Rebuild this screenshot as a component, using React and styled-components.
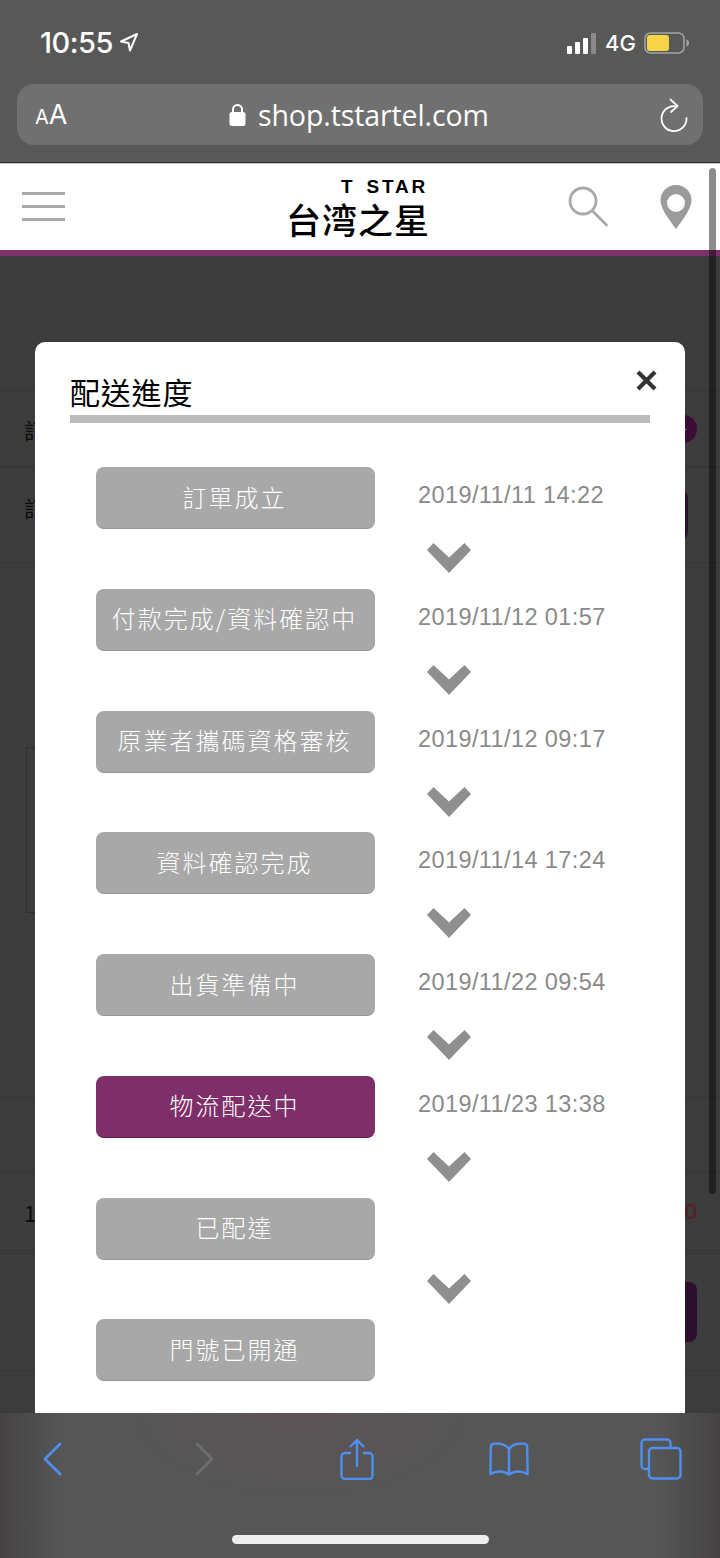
import styled, { createGlobalStyle } from "styled-components";

const steps = [
  { label: "訂單成立", time: "2019/11/11 14:22" },
  { label: "付款完成/資料確認中", time: "2019/11/12 01:57" },
  { label: "原業者攜碼資格審核", time: "2019/11/12 09:17" },
  { label: "資料確認完成", time: "2019/11/14 17:24" },
  { label: "出貨準備中", time: "2019/11/22 09:54" },
  { label: "物流配送中", time: "2019/11/23 13:38", active: true },
  { label: "已配達" },
  { label: "門號已開通" },
];

function App() {
  return (
    <Screen>
      <GlobalStyle />
      <StatusBar>
        <TimeGroup>
          <Clock>10:55</Clock>
          <svg width="20" height="20" viewBox="0 0 20 20" fill="none" stroke="#fff" strokeWidth="2" strokeLinejoin="round">
            <path d="M18 2 2 9.5l7.5 1.5 1.5 7.5z" />
          </svg>
        </TimeGroup>
        <Indicators>
          <svg width="30" height="21" viewBox="0 0 30 21" fill="#fff">
            <rect x="0" y="13" width="5" height="8" rx="1" />
            <rect x="8" y="9" width="5" height="12" rx="1" />
            <rect x="16" y="5" width="5" height="16" rx="1" />
            <rect x="24" y="0" width="5" height="21" rx="1" fill="#8a8a8a" />
          </svg>
          <Network>4G</Network>
          <svg width="46" height="22" viewBox="0 0 46 22">
            <rect x="1" y="1" width="39" height="20" rx="5.5" fill="none" stroke="#a5a5a5" strokeWidth="1.5" />
            <rect x="3" y="3" width="22" height="16" rx="3" fill="#f7d544" />
            <path d="M42.5 7.5c2 .6 2.5 2 2.5 3.500s-.5 2.900-2.500 3.500z" fill="#a5a5a5" />
          </svg>
        </Indicators>
      </StatusBar>
      <AddressBar>
        <FontSize>
          <small>A</small>A
        </FontSize>
        <Url>
          <svg width="17" height="24" viewBox="0 0 17 24" fill="#fff">
            <path d="M4 10V6.500a4.500 4.500 0 0 1 9 0V10" fill="none" stroke="#fff" strokeWidth="2" />
            <rect x="0.500" y="9" width="16" height="14" rx="2.500" />
          </svg>
          shop.tstartel.com
        </Url>
        <svg width="30" height="34" viewBox="0 0 30 34" fill="none" stroke="#fff" strokeWidth="1.800" strokeLinecap="round" strokeLinejoin="round">
          <path d="M18 8.500A12.500 12.500 0 1 0 27.500 20" />
          <path d="M11.500 1.500 18.500 8 12 14" />
        </svg>
      </AddressBar>
      <SiteHeader>
        <Burger>
          <span />
          <span />
          <span />
        </Burger>
        <Logo>
          <LogoLatin>T STAR</LogoLatin>
          <LogoHan>台湾之星</LogoHan>
        </Logo>
        <HeaderIcons>
          <svg width="42" height="42" viewBox="0 0 42 42" fill="none" stroke="#a9a9a9" strokeWidth="2.800" strokeLinecap="round">
            <circle cx="15" cy="15" r="13" />
            <path d="M24.500 25 38.500 39" />
          </svg>
          <svg width="32" height="44" viewBox="0 0 32 44">
            <path fillRule="evenodd" fill="#9b9b9b" d="M16 0C7 0 .500 7 .500 15.500.500 23 8 33 16 44c8-11 15.500-21 15.500-28.500C31.500 7 25 0 16 0zm0 9a9 9 0 1 1 0 18 9 9 0 0 1 0-18z" />
          </svg>
        </HeaderIcons>
      </SiteHeader>
      <Backdrop>
        <BgRow $height={77}>
          <BgLabel>訂單編號</BgLabel>
          <BgCircle>+</BgCircle>
        </BgRow>
        <BgRow $height={96}>
          <BgLabel $raised>訂單狀態</BgLabel>
          <BgButton $height={50} />
        </BgRow>
        <BgBox />
        <BgRow $height={75} $gap={184}>
          <BgLabel />
        </BgRow>
        <BgRow $height={78} $gap={1}>
          <BgLabel>1</BgLabel>
          <BgPrice>0</BgPrice>
        </BgRow>
        <BgRow $height={118} $gap={2}>
          <BgLabel />
          <BgButton $height={60} $wide />
        </BgRow>
      </Backdrop>
      <Modal>
        <CloseButton>
          <svg width="21" height="21" viewBox="0 0 21 21" stroke="#333" strokeWidth="4.200">
            <path d="M2 2l17 17M19 2 2 19" />
          </svg>
        </CloseButton>
        <ModalTitle>配送進度</ModalTitle>
        <StepList>
          {steps.map((step, i) => (
            <Step key={step.label}>
              <StepLabel $active={step.active}>{step.label}</StepLabel>
              <StepTime>{step.time}</StepTime>
              {i < steps.length - 1 && (
                <Chevron width="44" height="30" viewBox="0 0 44 30">
                  <path d="M6.500 0 22 14.500 37.500 0 44 7 22 30 0 7z" fill="#8f8f8f" />
                </Chevron>
              )}
            </Step>
          ))}
        </StepList>
      </Modal>
      <Scrollbar />
      <Toolbar>
        <ToolSlot>
          <svg width="20" height="34" viewBox="0 0 20 34" fill="none" stroke="#4f8ff0" strokeWidth="2.800" strokeLinecap="round" strokeLinejoin="round">
            <path d="M18 2 3 17l15 15" />
          </svg>
        </ToolSlot>
        <ToolSlot>
          <svg width="20" height="34" viewBox="0 0 20 34" fill="none" stroke="#6e6e6e" strokeWidth="2.800" strokeLinecap="round" strokeLinejoin="round">
            <path d="M3 2l15 15L3 32" />
          </svg>
        </ToolSlot>
        <ToolSlot>
          <svg width="34" height="42" viewBox="0 0 34 42" fill="none" stroke="#4f8ff0" strokeWidth="2.400" strokeLinecap="round" strokeLinejoin="round">
            <path d="M10 15H5a3.500 3.500 0 0 0-3.500 3.500v19A3.500 3.500 0 0 0 5 41h24a3.500 3.500 0 0 0 3.500-3.500v-19A3.500 3.500 0 0 0 29 15h-5" />
            <path d="M17 28V2M10.500 8.500 17 2l6.500 6.500" />
          </svg>
        </ToolSlot>
        <ToolSlot>
          <svg width="40" height="34" viewBox="0 0 40 34" fill="none" stroke="#4f8ff0" strokeWidth="2.400" strokeLinecap="round" strokeLinejoin="round">
            <path d="M20 7C17 2.500 12 1.500 7 1.500c-2 0-4 .5-5 1.500C1.500 12 1.500 22 1.500 32 7 28.500 15 28.500 20 32.500c5-4 13-4 18.500-.5 0-10 0-20-.5-29-1-1-3-1.500-5-1.500-5 0-10 1-13 5.500zM20 7v25" />
          </svg>
        </ToolSlot>
        <ToolSlot>
          <svg width="42" height="42" viewBox="0 0 42 42" fill="none" stroke="#4f8ff0" strokeWidth="2.400" strokeLinejoin="round">
            <path d="M9 31H5a3.500 3.500 0 0 1-3.500-3.500V5A3.500 3.500 0 0 1 5 1.500h22A3.500 3.500 0 0 1 30.500 5v4" />
            <rect x="9" y="10" width="31.500" height="30.500" rx="3.500" />
          </svg>
        </ToolSlot>
        <HomeIndicator />
      </Toolbar>
    </Screen>
  );
}

const GlobalStyle = createGlobalStyle`
  html, body {
    margin: 0;
    padding: 0;
    background: #3c3c3c;
  }
`;

const Screen = styled.div`
  position: relative;
  width: 720px;
  height: 1558px;
  overflow: hidden;
  display: flex;
  flex-direction: column;
  background: #3c3c3c;
  font-family: "Liberation Sans", "Noto Sans CJK TC", sans-serif;
`;

const StatusBar = styled.div`
  height: 84px;
  flex: none;
  box-sizing: border-box;
  padding: 2px 30px 0 40px;
  display: flex;
  justify-content: space-between;
  align-items: center;
  background: #585858;
  color: #fff;
`;

const TimeGroup = styled.div`
  display: flex;
  align-items: center;
  gap: 6px;
  margin-bottom: 2px;
`;

const Clock = styled.span`
  font-family: Inter, sans-serif;
  font-size: 29px;
  font-weight: 500;
  letter-spacing: -0.5px;
`;

const Indicators = styled.div`
  display: flex;
  align-items: center;
  gap: 8px;
`;

const Network = styled.span`
  font-family: Inter, sans-serif;
  font-size: 22px;
  font-weight: 500;
`;

const AddressBar = styled.div`
  height: 79px;
  flex: none;
  box-sizing: border-box;
  padding: 0 0 17px 0;
  background: #585858;
  border-bottom: 1px solid #2c2c2c;
  display: flex;
  align-items: stretch;
  position: relative;
  &::before {
    content: "";
    flex: 0 0 17px;
  }
  &::after {
    content: "";
    position: absolute;
    left: 17px;
    right: 17px;
    top: 0;
    bottom: 17px;
    background: #707070;
    border-radius: 17px;
  }
  & > * {
    position: relative;
    z-index: 1;
    align-self: center;
  }
  & > svg {
    margin-left: 170px;
  }
`;

const FontSize = styled.div`
  width: 188px;
  padding-left: 18px;
  box-sizing: border-box;
  color: #fff;
  font-family: Inter, sans-serif;
  font-size: 27px;
  small {
    font-size: 20px;
  }
`;

const Url = styled.div`
  display: flex;
  align-items: center;
  gap: 12px;
  padding-left: 24px;
  color: #fff;
  font-family: "Open Sans", sans-serif;
  font-size: 28.500px;
  letter-spacing: -0.1px;
  white-space: nowrap;
`;

const SiteHeader = styled.header`
  height: 86px;
  flex: none;
  border-top: 1px solid #c8c8c8;
  background: #fff;
  border-bottom: 6px solid #7e2e69;
  display: flex;
  align-items: center;
  padding: 0 28px 0 22px;
`;

const Burger = styled.div`
  width: 43px;
  display: flex;
  flex-direction: column;
  gap: 10px;
  margin-bottom: 1px;
  span {
    display: block;
    height: 3px;
    background: #a9a9a9;
  }
`;

const Logo = styled.div`
  margin: 0 0 2px 222px;
  width: 141px;
  display: flex;
  flex-direction: column;
  align-items: flex-end;
  color: #000;
  line-height: 1;
`;

const LogoLatin = styled.span`
  font-family: "Liberation Sans", sans-serif;
  font-size: 19px;
  font-weight: 700;
  letter-spacing: 2.800px;
  word-spacing: 3px;
  margin-bottom: 5px;
`;

const LogoHan = styled.span`
  font-family: "Noto Sans CJK SC", sans-serif;
  font-size: 35px;
  font-weight: 500;
  letter-spacing: 1px;
  margin-right: -2px;
  white-space: nowrap;
`;

const HeaderIcons = styled.div`
  margin-left: auto;
  display: flex;
  align-items: center;
  gap: 50px;
`;

const Backdrop = styled.main`
  flex: 1;
  padding-top: 134px;
  display: flex;
  flex-direction: column;
`;

const BgRow = styled.div`
  height: ${(p) => p.$height}px;
  flex: none;
  margin-top: ${(p) => p.$gap || 0}px;
  box-sizing: border-box;
  border: 1px solid #363636;
  border-width: 1px 0;
  display: flex;
  align-items: center;
  justify-content: space-between;
  padding: 0 23px 0 24px;
  color: #0c0c0c;
  font-size: 22px;
`;

const BgLabel = styled.span`
  font-family: "Noto Sans CJK TC", sans-serif;
  margin-bottom: ${(p) => (p.$raised ? 16 : 0)}px;
`;

const BgCircle = styled.span`
  width: 28px;
  height: 28px;
  border-radius: 50%;
  background: #3a0c36;
  color: #8a6a86;
  font-size: 14px;
  line-height: 28px;
  text-align: center;
`;

const BgButton = styled.span`
  width: 30px;
  height: ${(p) => p.$height}px;
  margin-right: ${(p) => (p.$wide ? 0 : 9)}px;
  border-radius: 8px;
  background: #2c0f2a;
`;

const BgPrice = styled.span`
  color: #5a1c1c;
`;

const BgBox = styled.div`
  height: 166px;
  flex: none;
  box-sizing: border-box;
  margin: 184px 40px 0 26px;
  border: 1px solid #2e2e2e;
`;

const Modal = styled.section`
  position: absolute;
  left: 35px;
  top: 342px;
  width: 650px;
  height: 1072px;
  box-sizing: border-box;
  padding: 30px 35px 0;
  background: #fff;
  border-radius: 10px 10px 0 0;
  border-bottom: 1px solid #222;
`;

const CloseButton = styled.div`
  position: absolute;
  top: 28px;
  right: 28px;
  line-height: 0;
`;

const ModalTitle = styled.h2`
  margin: 0;
  height: 51px;
  box-sizing: border-box;
  border-bottom: 8px solid #bcbcbc;
  color: #000;
  font-family: "Noto Sans CJK TC", sans-serif;
  font-size: 30px;
  font-weight: 400;
  letter-spacing: 0.8px;
  line-height: 39px;
`;

const StepList = styled.div`
  padding: 44px 0 0 26px;
`;

const Step = styled.div`
  display: grid;
  grid-template-columns: 279px 1fr;
  grid-template-rows: 62px 59.750px;
  column-gap: 43px;
`;

const StepLabel = styled.div`
  box-sizing: border-box;
  height: 62px;
  padding: 0 2px 3px 0;
  border-radius: 8px;
  display: flex;
  align-items: center;
  justify-content: center;
  color: #fff;
  background: ${(p) => (p.$active ? "#7e2e69" : "#a8a8a8")};
  border-bottom: 1px solid ${(p) => (p.$active ? "#5f1a4e" : "#959595")};
  font-family: "Noto Sans CJK TC", sans-serif;
  font-size: 24px;
  font-weight: 300;
  letter-spacing: 2px;
  white-space: nowrap;
`;

const StepTime = styled.div`
  color: #8a8a8a;
  font-size: 23.500px;
  letter-spacing: 0.4px;
  line-height: 56px;
  white-space: nowrap;
`;

const Chevron = styled.svg`
  grid-column: 2;
  grid-row: 2;
  margin: 14px 0 0 9px;
`;

const Scrollbar = styled.div`
  position: absolute;
  left: 709px;
  top: 168px;
  width: 7px;
  height: 1026px;
  border-radius: 4px;
  background: rgba(0, 0, 0, 0.45);
`;

const Toolbar = styled.footer`
  position: relative;
  height: 145px;
  flex: none;
  box-sizing: border-box;
  padding: 24px 37px 0 30px;
  display: flex;
  justify-content: space-between;
  align-items: flex-start;
  background:
    radial-gradient(ellipse 180px 90px at 300px 0, rgba(100, 80, 88, 0.4), transparent),
    linear-gradient(90deg, #454244 0, #565656 60px, #565656 660px, #454244 100%);
`;

const ToolSlot = styled.div`
  width: 44px;
  height: 44px;
  display: flex;
  align-items: center;
  justify-content: center;
`;

const HomeIndicator = styled.div`
  position: absolute;
  left: 232px;
  top: 122px;
  width: 257px;
  height: 9px;
  border-radius: 5px;
  background: #eee;
`;

export default App;
